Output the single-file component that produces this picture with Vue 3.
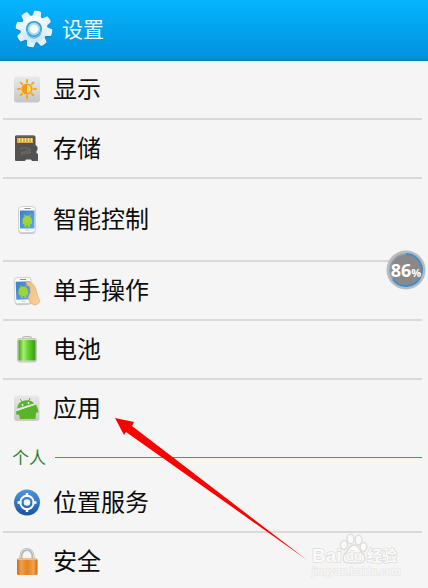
<script setup>
const device = [
  { id: 'display', label: '显示' },
  { id: 'storage', label: '存储' },
  { id: 'smart', label: '智能控制', tall: true },
  { id: 'onehand', label: '单手操作' },
  { id: 'battery', label: '电池' },
  { id: 'apps', label: '应用' },
]
const personal = [
  { id: 'location', label: '位置服务' },
  { id: 'security', label: '安全' },
]
const groups = [
  { id: 'device', items: device },
  { id: 'personal', title: '个人', items: personal },
]
const teeth = [0, 45, 90, 135, 180, 225, 270, 315]
</script>

<template>
  <div class="page">
    <header class="bar">
      <svg class="gear" viewBox="0 0 40 40" aria-hidden="true">
        <defs>
          <linearGradient id="gearFill" x1="0" y1="0" x2="0" y2="1">
            <stop offset="0" stop-color="#ffffff" />
            <stop offset="1" stop-color="#c9e6f6" />
          </linearGradient>
        </defs>
        <g transform="translate(20 21)" fill="#0671ac" opacity=".45">
          <circle r="14" />
          <path v-for="t in teeth" :key="t" d="M-5-12L-3.6-18Q0-19.5 3.6-18L5-12z" :transform="`rotate(${t + 12})`" />
        </g>
        <g transform="translate(20 20)">
          <path v-for="t in teeth" :key="t" d="M-4.500-12L-3.400-18Q0-19 3.400-18L4.500-12z" fill="#e4f2fa" :transform="`rotate(${t + 12})`" />
          <circle r="13.500" fill="url(#gearFill)" />
          <circle r="8" fill="#2a9dd3" />
          <circle r="6.400" fill="#a6d8f0" />
          <circle r="4.400" fill="#f2fafe" />
          <path d="M-7 2A7 7 0 0 0 7 2" fill="none" stroke="#71bfe4" stroke-width="1.500" />
        </g>
      </svg>
      <h1 class="title">设置</h1>
    </header>

    <main>
      <section v-for="group in groups" :key="group.id">
        <h2 v-if="group.title" class="section">{{ group.title }}</h2>
        <ul class="list">
          <li v-for="item in group.items" :key="item.id" class="item">
            <a class="row" :class="{ tall: item.tall }" :href="'#' + item.id">
              <svg v-if="item.id === 'display'" class="icon" viewBox="0 0 28 30" aria-hidden="true">
                <linearGradient id="tile" x1="0" y1="0" x2="0" y2="1">
                  <stop offset="0" stop-color="#e9e9e9" /><stop offset="1" stop-color="#c6c6c8" />
                </linearGradient>
                <rect x="1" y="1.500" width="26" height="26" rx="3" fill="url(#tile)" />
                <g stroke="#efa91d" stroke-width="2" stroke-linecap="round">
                  <path v-for="t in teeth" :key="t" d="M0-7V-9" :transform="`translate(14 14) rotate(${t})`" />
                </g>
                <circle cx="14" cy="14" r="4.800" fill="#f8dc73" stroke="#efa01b" stroke-width="1.600" />
                <path d="M14 9.200a4.800 4.800 0 0 0 0 9.600z" fill="#f39a18" />
              </svg>

              <svg v-else-if="item.id === 'storage'" class="icon" viewBox="0 0 28 30" aria-hidden="true">
                <path d="M3 1.500h18q1.500 0 1.500 1.500v8l2 2v3l-1 1v2l1.500 1v7h-6l-1-1.500h-5l-1 1.500H3q-1 0-1-1V2.500q0-1 1-1z" fill="#555351" />
                <path d="M3 2h18" stroke="#77736e" />
                <rect x="4" y="4" width="16" height="5" fill="#dfa94b" />
                <path d="M6.500 4v4M9.500 4v4M12.500 4v4M15.500 4v4M18.500 4v4" stroke="#fae0a0" />
                <path d="M7 15q6-3 11 1M8 18q4 3 10 0M8 21q4-5 9-4" fill="none" stroke="#686767" stroke-width="1.500" />
              </svg>

              <svg v-else-if="item.id === 'smart' || item.id === 'onehand'" class="icon" viewBox="0 0 28 30" aria-hidden="true">
                <defs>
                  <linearGradient id="screen" x1="0" y1="0" x2="1" y2="1">
                    <stop offset="0" stop-color="#3f80c4" /><stop offset="1" stop-color="#5fa6f5" />
                  </linearGradient>
                  <linearGradient id="skin" x1="0" y1="0" x2="1" y2="1">
                    <stop offset="0" stop-color="#f2bd7c" /><stop offset="1" stop-color="#f4d2a0" />
                  </linearGradient>
                </defs>
                <g :transform="item.id === 'onehand' ? 'translate(-4 0) rotate(-2 14 15)' : 'translate(0 0)'">
                  <rect x="5.500" y="2" width="17" height="27" rx="3.500" fill="#c4c7cc" />
                  <rect x="5.500" y="1.500" width="17" height="26" rx="3.500" fill="#fcfcfd" stroke="#cfd2d7" />
                  <path d="M11.500 3.500h6" stroke="#8b9097" />
                  <rect x="7" y="5.500" width="14.500" height="18" fill="url(#screen)" />
                  <path d="M9.500 16q0-5 4.500-5.500 5 .5 5 5.500v2.500l-2 1v2.500h-2v-2h-1.500v2h-2v-2.500l-2-1z" fill="#9bd632" />
                  <path d="M11.500 9.500l1 2M17.500 9.500l-1 2" stroke="#9bd632" />
                  <rect x="12" y="24.500" width="4.500" height="1.500" rx=".7" fill="#d7dadd" />
                </g>
                <path v-if="item.id === 'onehand'" d="M13 6.500Q14 4 17 6.500Q22 8 23.500 15Q24 20 27 25Q25.500 29 21 29Q16 27 15 22L17.500 16L17 11Q13 9 13 6.500z" fill="url(#skin)" stroke="#dda765" stroke-width=".6" />
              </svg>

              <svg v-else-if="item.id === 'battery'" class="icon" viewBox="0 0 28 30" aria-hidden="true">
                <linearGradient id="cell" x1="0" y1="0" x2="1" y2="0">
                  <stop offset="0" stop-color="#49a51d" /><stop offset=".3" stop-color="#a6ee6f" />
                  <stop offset=".55" stop-color="#63d52b" /><stop offset="1" stop-color="#3c9718" />
                </linearGradient>
                <path d="M9 4q0-2.500 2.500-2.500h5Q19 1.500 19 4" fill="#e6e6e6" stroke="#b5b5b5" />
                <rect x="4.500" y="3.500" width="19" height="23.500" rx="2" fill="#d4d9d1" stroke="#c2c7bf" />
                <rect x="5.500" y="5" width="17" height="20.500" rx="1" fill="url(#cell)" />
              </svg>

              <svg v-else-if="item.id === 'apps'" class="icon" viewBox="0 0 28 30" aria-hidden="true">
                <linearGradient id="tile2" x1="0" y1="0" x2="0" y2="1">
                  <stop offset="0" stop-color="#e8e8e8" /><stop offset="1" stop-color="#c8c8ca" />
                </linearGradient>
                <rect x="1" y="1.500" width="25.500" height="25.500" rx="3" fill="url(#tile2)" />
                <path d="M4 14.500Q5 7.500 11.500 6.500Q18 5.500 21 9.500z" fill="#57b529" />
                <path d="M7 5l2.500 3M17 4l-1.500 3.500" stroke="#57b529" />
                <path d="M3 17.500L8 15.500L23 10.500Q25 14 25.500 18L23 19L22.500 25H7L6 20.500L3.500 21z" fill="#56b529" />
                <path d="M3.500 16.500L22.500 10" stroke="#e8f3df" stroke-width="1.300" />
                <circle cx="9.500" cy="11" r=".9" fill="#fff" /><circle cx="15.500" cy="9" r=".9" fill="#fff" />
              </svg>

              <svg v-else-if="item.id === 'location'" class="icon" viewBox="0 0 28 30" aria-hidden="true">
                <linearGradient id="disc" x1="0" y1="0" x2="0" y2="1">
                  <stop offset="0" stop-color="#4b96dc" /><stop offset="1" stop-color="#1a55a0" />
                </linearGradient>
                <circle cx="14" cy="14.500" r="13" fill="url(#disc)" />
                <circle cx="14" cy="14.500" r="6.700" fill="none" stroke="#fff" stroke-width="2" />
                <path d="M14 5v4M14 20v4M4.500 14.500h4M19.500 14.500h4" stroke="#fff" stroke-width="2.500" />
                <circle cx="14" cy="14.500" r="3.300" fill="#eff6fd" />
              </svg>

              <svg v-else class="icon" viewBox="0 0 28 30" aria-hidden="true">
                <linearGradient id="lock" x1="0" y1="0" x2="1" y2="0">
                  <stop offset="0" stop-color="#c96c15" /><stop offset=".2" stop-color="#f1a04a" />
                  <stop offset=".5" stop-color="#e5811d" /><stop offset=".82" stop-color="#f2a34c" />
                  <stop offset="1" stop-color="#c8690f" />
                </linearGradient>
                <path d="M8 14V9a6 6.500 0 0 1 12 0v5" fill="none" stroke="#b9b6b2" stroke-width="3" />
                <path d="M7.500 13V9a6.500 7 0 0 1 13 0v4" fill="none" stroke="#dedcd8" />
                <rect x="4" y="11.500" width="20.500" height="16.500" rx="1.500" fill="url(#lock)" />
                <path d="M5 12.500h18.500" stroke="#f7bc79" />
              </svg>
              <span class="label">{{ item.label }}</span>
            </a>
          </li>
        </ul>
      </section>
    </main>

    <div class="meter">
      <svg class="dial" viewBox="0 0 40 40" aria-hidden="true">
        <circle cx="20" cy="20" r="19.500" fill="#b9bbbd" />
        <circle cx="20" cy="20" r="16" fill="#8b8987" stroke="#8fa0ad" stroke-width="1.500" />
        <path d="M20 4A16 16 0 1 1 7 29.400" fill="none" stroke="#3f8fd0" stroke-width="2" />
      </svg>
      <span class="value">86<small>%</small></span>
    </div>

    <svg class="arrow" viewBox="0 0 192 143" aria-hidden="true">
      <path d="M0 0L19 4L17 8L192 142L11 14L9 17z" fill="#fe0000" />
    </svg>

    <svg class="mark" viewBox="0 0 96 50">
      <g fill="#fafafa" stroke="#dedede" stroke-width="1.500">
        <ellipse cx="34" cy="16" rx="3.500" ry="4.500" />
        <ellipse cx="40.500" cy="10" rx="3.500" ry="4.700" />
        <ellipse cx="48.500" cy="11" rx="3.500" ry="4.700" />
        <ellipse cx="53.500" cy="18" rx="3.300" ry="4.500" />
        <path d="M44 16Q48 16 50 21L54 26Q57 33 50 34H38Q31 33 34 26L38 21Q40 16 44 16z" />
        <g class="brand" paint-order="stroke">
          <text x="2" y="33" font-size="19">Bai</text>
          <text x="36" y="31" font-size="13">du</text>
          <text x="57" y="32" font-size="15">经验</text>
          <text x="2" y="46" font-size="11" class="site" stroke="#e8e8e8">jingyan.baidu.com</text>
        </g>
      </g>
    </svg>
  </div>
</template>

<style>
body {
  margin: 0;
  background: #f5f5f5;
}
</style>

<style scoped>
.page {
  position: relative;
  min-height: 100vh;
  overflow: hidden;
  background: #f5f5f5;
  color: #0c0c0c;
  font-family: "Noto Sans CJK SC", sans-serif;
}
.bar {
  display: flex;
  align-items: center;
  gap: 8px;
  box-sizing: border-box;
  height: 61px;
  padding: 0 14px 2px;
  border-bottom: 1px solid #0878b4;
  background: linear-gradient(#06b4fe, #0290dc);
}
.gear {
  width: 40px;
  height: 40px;
}
.title {
  margin: 0;
  padding-bottom: 3px;
  color: #f2fbff;
  font-size: 21px;
  font-weight: 400;
  line-height: 30px;
}
.list {
  margin: 0;
  padding: 0 6px 0 3px;
  list-style: none;
}
.item {
  border-bottom: 2px solid #d9d9d9;
}
.item:last-child {
  border-bottom: 0;
}
.row {
  display: flex;
  align-items: center;
  gap: 12px;
  min-height: 57px;
  padding-left: 10px;
  color: inherit;
  font-size: 24px;
  line-height: 36px;
  text-decoration: none;
}
.row.tall {
  min-height: 81px;
}
.label {
  padding-bottom: 3px;
}
.icon {
  width: 28px;
  height: 30px;
  flex: none;
}
.section {
  display: flex;
  align-items: center;
  gap: 9px;
  margin: 0;
  padding: 3px 6px 0 12px;
  color: #2b7f30;
  font-size: 17px;
  font-weight: 400;
  line-height: 34px;
}
.section::after {
  content: "";
  flex: 1;
  height: 1px;
  background: #45a048;
}
.meter {
  position: absolute;
  top: 250px;
  right: 2px;
  width: 40px;
  height: 40px;
}
.dial {
  display: block;
  width: 40px;
  height: 40px;
}
.value {
  position: absolute;
  inset: 0;
  color: #fff;
  font-family: "Open Sans", sans-serif;
  font-size: 18px;
  font-weight: 700;
  line-height: 40px;
  text-align: center;
  white-space: nowrap;
}
.value small {
  font-size: 11px;
}
.arrow {
  position: absolute;
  top: 418px;
  left: 115px;
  width: 192px;
  height: 143px;
  pointer-events: none;
}
.mark {
  position: absolute;
  top: 529px;
  right: 22px;
  width: 96px;
  height: 50px;
  pointer-events: none;
}
.brand {
  font-family: "Liberation Sans", "Noto Sans CJK SC", sans-serif;
  font-weight: 700;
}
.site {
  font-weight: 400;
}
</style>
